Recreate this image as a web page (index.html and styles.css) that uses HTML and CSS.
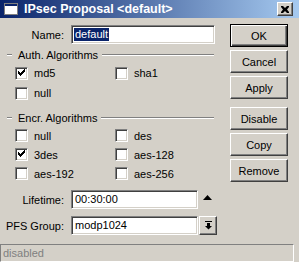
FILE: index.html
```html
<!DOCTYPE html>
<html>
<head>
<meta charset="utf-8">
<link rel="stylesheet" href="styles.css">
</head>
<body>
<div class="window">
  <div class="titlebar">
    <svg class="app-icon" width="14" height="12" viewBox="0 0 14 12">
      <rect x="0" y="0" width="14" height="12" fill="#fff"/>
      <rect x="0" y="0" width="14" height="3" fill="#0a246a"/>
      <rect x="0.5" y="0.5" width="13" height="11" fill="none" stroke="#808080"/>
    </svg>
    <span class="title">IPsec Proposal &lt;default&gt;</span>
    <div class="close">
      <svg width="8" height="7" viewBox="0 0 8 7">
        <path d="M0 0h2l2 2 2-2h2v1L6 3.5 8 6v1H6L4 5 2 7H0V6l2-2.5L0 1z" fill="#000"/>
      </svg>
    </div>
  </div>
  <div class="main">
    <div class="left">
      <div class="field-row name-row">
        <label class="lbl">Name:</label>
        <div class="field wide"><span class="sel">default</span></div>
      </div>
      <div class="group-head"><span class="dash"></span><span class="gtext">Auth. Algorithms</span><span class="gline"></span></div>
      <div class="checks auth">
        <div class="chk"><span class="box on"></span>md5</div>
        <div class="chk"><span class="box"></span>sha1</div>
        <div class="chk"><span class="box"></span>null</div>
      </div>
      <div class="group-head encr"><span class="dash"></span><span class="gtext">Encr. Algorithms</span><span class="gline"></span></div>
      <div class="checks encr-checks">
        <div class="chk"><span class="box"></span>null</div>
        <div class="chk"><span class="box"></span>des</div>
        <div class="chk"><span class="box on"></span>3des</div>
        <div class="chk"><span class="box"></span>aes-128</div>
        <div class="chk"><span class="box"></span>aes-192</div>
        <div class="chk"><span class="box"></span>aes-256</div>
      </div>
      <div class="field-row life-row">
        <label class="lbl">Lifetime:</label>
        <div class="field mid">00:30:00</div>
        <svg class="uparrow" width="9" height="5" viewBox="0 0 9 5"><path d="M4.5 0L9 5H0z" fill="#000"/></svg>
      </div>
      <div class="field-row pfs-row">
        <label class="lbl">PFS Group:</label>
        <div class="field mid">modp1024</div>
        <div class="dropbtn">
          <svg width="7" height="9" viewBox="0 0 7 9"><rect x="0" y="0" width="7" height="1" fill="#000"/><rect x="2" y="2" width="3" height="3" fill="#000"/><path d="M0 5h7L3.5 8.5z" fill="#000"/></svg>
        </div>
      </div>
    </div>
    <div class="buttons">
      <div class="btn default">OK</div>
      <div class="btn">Cancel</div>
      <div class="btn">Apply</div>
      <div class="btn gap">Disable</div>
      <div class="btn">Copy</div>
      <div class="btn">Remove</div>
    </div>
  </div>
  <div class="status">disabled</div>
</div>
</body>
</html>
```
FILE: styles.css
```css
html, body { margin: 0; padding: 0; background: #d4d0c8; }
.window {
  width: 299px; height: 262px; background: #d4d0c8; overflow: hidden;
  font-family: "Liberation Sans", Arial, sans-serif; font-size: 11px; color: #000;
  display: flex; flex-direction: column;
}
.titlebar {
  height: 18px; display: flex; align-items: center;
  background: linear-gradient(to right, #0a246a, #a6caf0);
  padding-left: 4px; box-sizing: border-box;
}
.app-icon { display: block; margin-right: 6px; }
.title { color: #fff; font-weight: bold; font-size: 12.5px; flex: 1; letter-spacing: 0; }
.close {
  width: 16px; height: 14px; box-sizing: border-box; margin-right: 6px;
  background: #d4d0c8; border: 1px solid; border-color: #fff #404040 #404040 #fff;
  box-shadow: inset -1px -1px #808080;
  display: flex; align-items: center; justify-content: center;
}
.close svg { display: block; }
.main { display: flex; flex: 1; }
.left { width: 218px; }
.field-row { display: flex; align-items: center; height: 19px; }
.lbl { width: 64px; text-align: right; margin-right: 7px; }
.name-row { margin-top: 7px; }
.field {
  height: 19px; box-sizing: border-box; background: #fff;
  border: 1px solid; border-color: #808080 #fff #fff #808080;
  box-shadow: inset 1px 1px #404040, inset -1px -1px #d4d0c8;
  padding: 2px 3px; line-height: 13px; white-space: nowrap;
}
.wide { width: 144px; padding-left: 2px; }
.mid { width: 127px; }
.sel { background: #0a246a; color: #fff; display: inline-block; padding: 0 1px; }
.group-head { display: flex; align-items: center; height: 14px; margin-top: 4px; }
.group-head.encr { margin-top: 8px; }
.dash, .gline { height: 0; border-top: 1px solid #808080; border-bottom: 1px solid #fff; }
.dash { width: 5px; margin-left: 7px; margin-right: 6px; }
.gtext { margin-right: 4px; }
.gline { flex: 1; margin-right: 4px; }
.checks { display: grid; grid-template-columns: 100px 100px; padding-left: 15px; }
.auth { margin-top: 1px; }
.auth .chk { height: 20px; }
.encr-checks { margin-top: 1px; }
.encr-checks .chk { height: 19px; }
.chk { display: flex; align-items: center; }
.box {
  width: 13px; height: 13px; box-sizing: border-box; background: #fff; margin-right: 6px;
  border: 1px solid; border-color: #808080 #fff #fff #808080;
  box-shadow: inset 1px 1px #404040, inset -1px -1px #d4d0c8; position: relative;
}
.box.on::after {
  content: ""; position: absolute; left: 2px; top: 1px; width: 7px; height: 7px;
  background:
    linear-gradient(#000,#000) 0 2px/1px 3px no-repeat,
    linear-gradient(#000,#000) 1px 3px/1px 3px no-repeat,
    linear-gradient(#000,#000) 2px 4px/1px 3px no-repeat,
    linear-gradient(#000,#000) 3px 3px/1px 3px no-repeat,
    linear-gradient(#000,#000) 4px 2px/1px 3px no-repeat,
    linear-gradient(#000,#000) 5px 1px/1px 3px no-repeat,
    linear-gradient(#000,#000) 6px 0/1px 3px no-repeat;
}
.life-row { margin-top: 7px; }
.pfs-row { margin-top: 7px; }
.uparrow { display: block; margin-left: 5px; margin-top: -5px; }
.dropbtn {
  width: 18px; height: 19px; box-sizing: border-box; margin-left: 1px;
  border: 1px solid; border-color: #fff #404040 #404040 #fff;
  box-shadow: inset -1px -1px #808080;
  display: flex; align-items: center; justify-content: center;
}
.dropbtn svg { display: block; }
.buttons { margin-left: 12px; width: 58px; padding-top: 6px; display: flex; flex-direction: column; gap: 3px; }
.btn {
  height: 23px; box-sizing: border-box; display: flex; align-items: center; justify-content: center;
  border: 1px solid; border-color: #fff #404040 #404040 #fff;
  box-shadow: inset -1px -1px #808080;
}
.btn.default {
  border-color: #000;
  box-shadow: inset 1px 1px #fff, inset -1px -1px #404040, inset -2px -2px #808080;
}
.btn.gap { margin-top: 5px; }
.status {
  height: 18px; width: 294px; box-sizing: border-box; margin-bottom: 0;
  border: 1px solid; border-color: #808080 #fff #fff #808080;
  color: #808080; padding-left: 2px; line-height: 16px;
}
```
